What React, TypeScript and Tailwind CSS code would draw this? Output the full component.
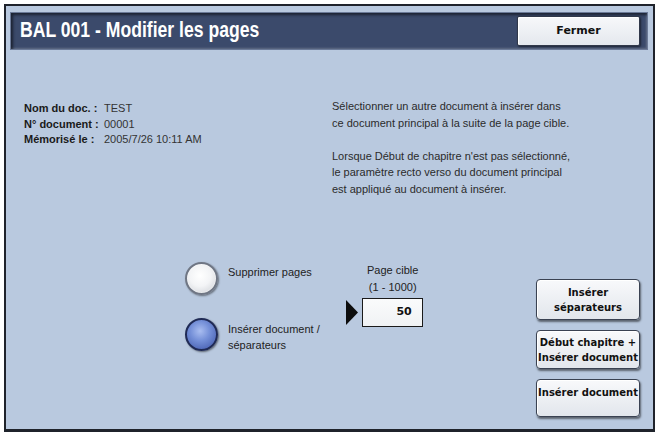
export default function App() {
  return (
    <div className="w-[660px] h-[437px] bg-white pt-[4px] pl-[4px] pr-[5px] pb-[5px] font-['Liberation_Sans',Arial,sans-serif]">
      <div className="h-full border-2 border-[#1f232b] border-b-[3px] bg-[#b9c9df] flex flex-col">
        {/* Header */}
        <div className="mt-[6px] ml-[4px] mr-[5px] h-[38px] flex items-center justify-between bg-[#3b4a6b] border border-[#6b7a98] shadow-[inset_2px_2px_3px_rgba(0,0,0,0.55),inset_-1px_-1px_2px_rgba(255,255,255,0.2)]">
          <h1 className="pl-[9px] w-[300px] whitespace-nowrap">
            <span className="inline-block origin-left scale-x-[0.8] text-white text-[22px] font-bold leading-none font-['Liberation_Sans',Arial,sans-serif]">
              BAL 001 - Modifier les pages
            </span>
          </h1>
          <button className="mr-[7px] w-[123px] h-[30px] rounded-[2px] border border-[#30384a] bg-[linear-gradient(#f7f8fa,#e4e8ee)] shadow-[inset_1px_1px_0_#fff,1px_1px_2px_rgba(0,0,0,0.5)] text-[11px] font-bold text-[#111] font-['DejaVu_Sans',sans-serif]">
            Fermer
          </button>
        </div>

        {/* Info + description */}
        <div className="mt-[51px] flex">
          <div className="pl-[18px] w-[326px] text-[11px] leading-[15.5px] text-[#1a1a1a]">
            <div className="flex">
              <span className="w-[80px] font-bold">Nom du doc. :</span>
              <span className="text-[#333]">TEST</span>
            </div>
            <div className="flex">
              <span className="w-[80px] font-bold">N° document :</span>
              <span className="text-[#333]">00001</span>
            </div>
            <div className="flex">
              <span className="w-[80px] font-bold">Mémorisé le :</span>
              <span className="text-[#333]">2005/7/26 10:11 AM</span>
            </div>
          </div>
          <div className="-mt-[3px] text-[11px] leading-[16.5px] text-[#2b2b2b]">
            <p>Sélectionner un autre document à insérer dans</p>
            <p>ce document principal à la suite de la page cible.</p>
            <p className="mt-[16.5px]">Lorsque Début de chapitre n'est pas sélectionné,</p>
            <p>le paramètre recto verso du document principal</p>
            <p>est appliqué au document à insérer.</p>
          </div>
        </div>

        {/* Options */}
        <div className="mt-auto pb-[12px] pr-[13px] flex items-start">
          <div className="ml-[179px] pt-[12px] flex flex-col gap-[23px]">
            <div className="flex items-start gap-[10px]">
              <div className="w-[33px] h-[33px] rounded-full border-2 border-[#6f7684] bg-[radial-gradient(circle_at_45%_40%,#ffffff_0%,#f3f4f6_45%,#c9ccd2_100%)] shadow-[1px_1px_2px_rgba(0,0,0,0.45),inset_0_0_2px_#fff]" />
              <span className="pt-[2px] text-[11px] leading-[16px] text-[#222]">Supprimer pages</span>
            </div>
            <div className="flex items-start gap-[10px]">
              <div className="w-[33px] h-[33px] rounded-full border-2 border-[#1f2a55] bg-[radial-gradient(circle_at_45%_38%,#a9bdf0_0%,#7590d8_40%,#3a52a6_100%)] shadow-[1px_1px_2px_rgba(0,0,0,0.5)]" />
              <span className="pt-[3px] text-[11px] leading-[16px] text-[#222]">
                Insérer document /<br />séparateurs
              </span>
            </div>
          </div>

          <div className="ml-[26px] pt-[12px] flex flex-col items-end">
            <div className="w-[64px] text-center text-[11px] leading-[16.5px] text-[#222] mr-[-2px]">
              <p>Page cible</p>
              <p>(1 - 1000)</p>
            </div>
            <div className="mt-[3px] flex items-center gap-[4px]">
              <svg width="12" height="25" viewBox="0 0 12 25">
                <polygon points="0,0 12,12.5 0,25" fill="#0d0d0d" />
              </svg>
              <div className="w-[61px] h-[29px] border border-[#1a1a1a] bg-[linear-gradient(#fafbfc,#f0f2f4)] flex items-center justify-end pr-[10px] text-[11px] font-bold text-[#111] font-['DejaVu_Sans',sans-serif]">
                50
              </div>
            </div>
          </div>

          <div className="ml-auto pt-[29px] flex flex-col gap-[10px]">
            <button className="w-[104px] h-[41px] rounded-[4px] border border-[#3a4252] bg-[linear-gradient(#f8f9fb,#e2e6ec)] shadow-[inset_1px_1px_0_#fff,1px_2px_2px_rgba(0,0,0,0.5)] text-[10px] leading-[15px] font-bold text-[#111] font-['DejaVu_Sans',sans-serif]">
              Insérer<br />séparateurs
            </button>
            <button className="w-[104px] h-[39px] rounded-[4px] border border-[#3a4252] bg-[linear-gradient(#f8f9fb,#e2e6ec)] shadow-[inset_1px_1px_0_#fff,1px_2px_2px_rgba(0,0,0,0.5)] text-[10px] leading-[15px] font-bold text-[#111] font-['DejaVu_Sans',sans-serif]">
              Début chapitre +<br />Insérer document
            </button>
            <button className="w-[104px] h-[38px] rounded-[4px] border border-[#3a4252] bg-[linear-gradient(#f8f9fb,#e2e6ec)] shadow-[inset_1px_1px_0_#fff,1px_2px_2px_rgba(0,0,0,0.5)] text-[10px] leading-[15px] font-bold text-[#111] font-['DejaVu_Sans',sans-serif] flex items-start justify-center pt-[5px]">
              Insérer document
            </button>
          </div>
        </div>
      </div>
    </div>
  );
}
